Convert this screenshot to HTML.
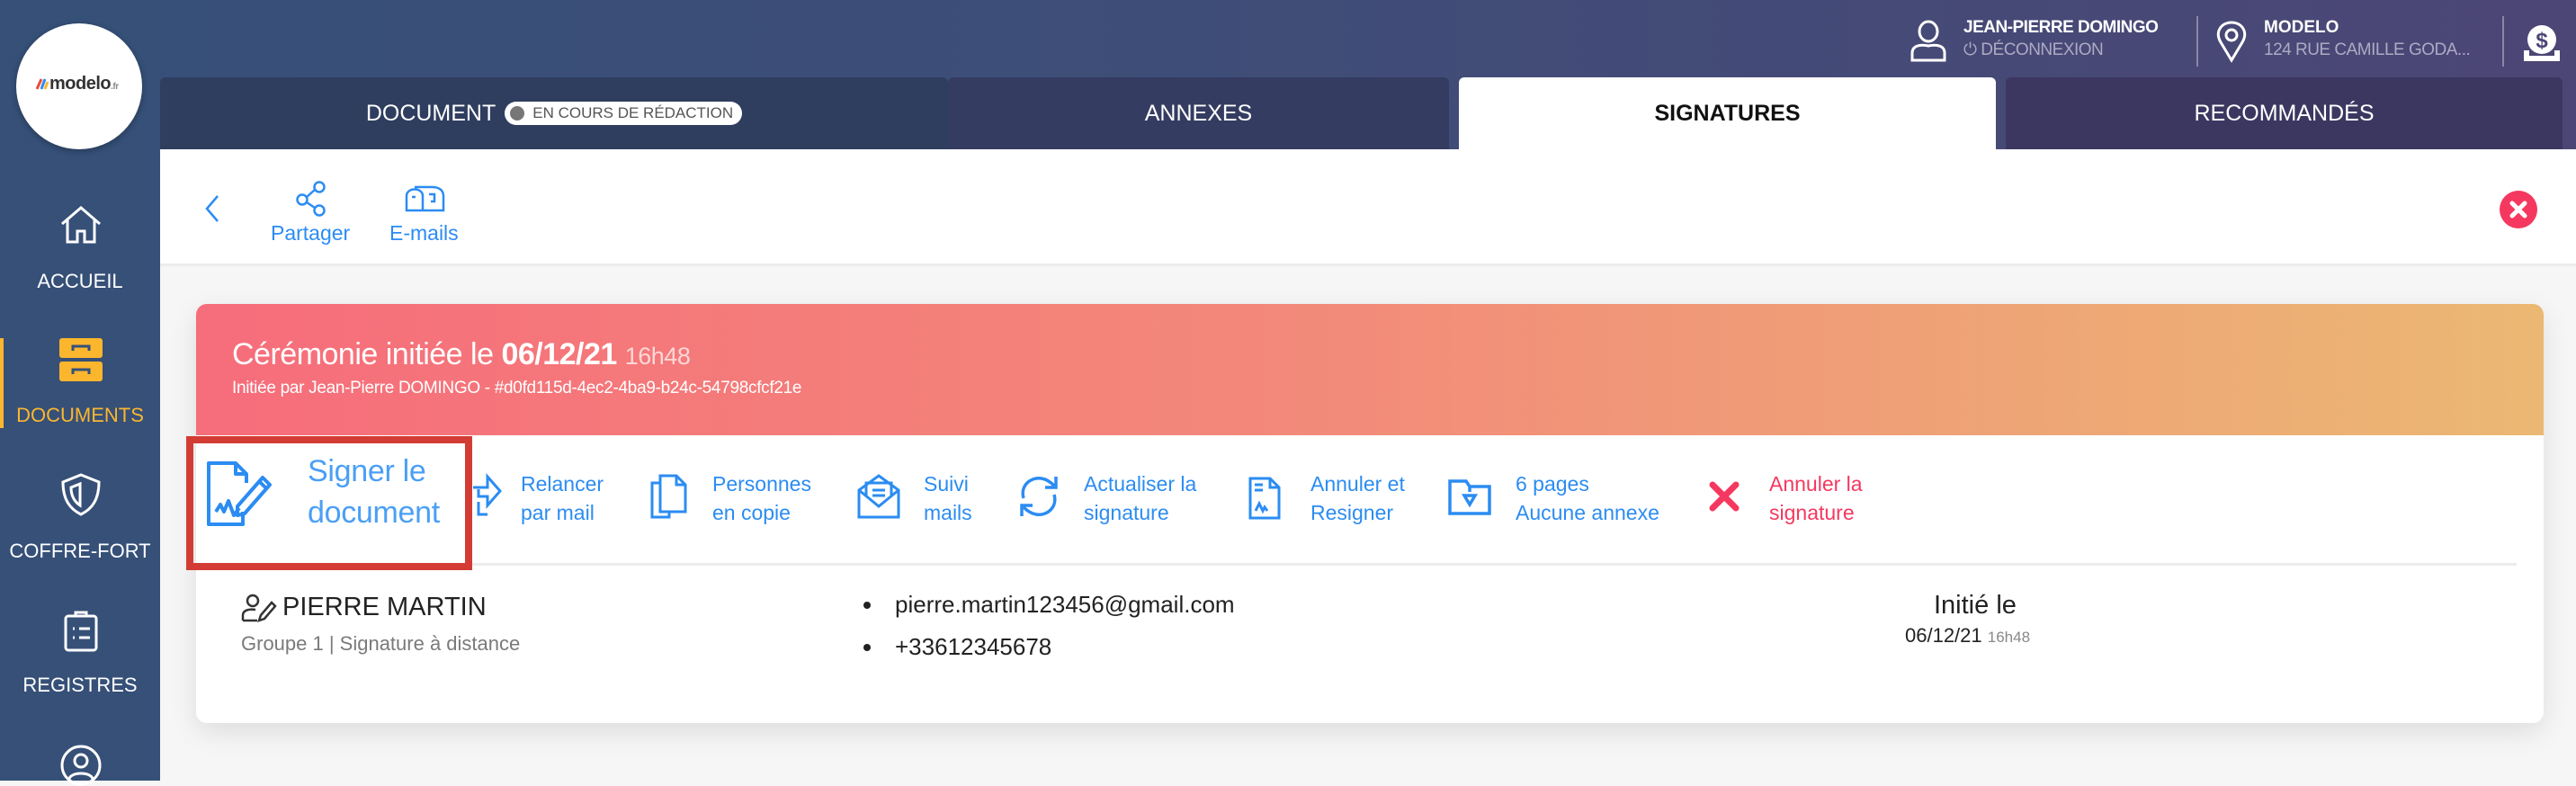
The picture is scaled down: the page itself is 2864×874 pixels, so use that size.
<!DOCTYPE html>
<html><head><meta charset="utf-8">
<style>
*{margin:0;padding:0;box-sizing:border-box}
body{width:2864px;height:868px;overflow:hidden;position:relative;font-family:"Liberation Sans",sans-serif;background:#f6f6f6}
.abs{position:absolute}
#top{left:0;top:0;width:2864px;height:166px;background:linear-gradient(90deg,#365079 0%,#3f4d77 50%,#4c4676 100%)}
#side{left:0;top:0;width:178px;height:868px;background:#365078}
.logo{left:18px;top:26px;width:140px;height:140px;border-radius:50%;background:#fff;box-shadow:0 2px 8px rgba(0,0,0,.3)}
.tab{top:86px;height:80px;color:#fff;font-size:25px;display:flex;align-items:center;justify-content:center;border-radius:6px 6px 0 0}
.slab{color:#fff;font-size:22px;width:178px;text-align:center;left:0}
.act{font-size:23px;line-height:32px;color:#2b8cf2}
svg{position:absolute;overflow:visible}
</style></head><body>
<div class="abs" id="top"></div>
<div class="abs" id="side"></div>
<div class="abs logo"></div>
<svg style="left:40px;top:86px" width="14" height="14" viewBox="0 0 14 14"><path d="M1 13 L6 2" stroke="#e94b3c" stroke-width="3"/><path d="M6 13 L10 2" stroke="#2b8cf2" stroke-width="3"/><path d="M10 13 L13 5" stroke="#fbb62e" stroke-width="3"/></svg>
<div class="abs" style="left:55px;top:82px;font-size:20px;font-weight:bold;color:#333;letter-spacing:-0.5px">modelo<span style="font-size:10px;color:#888">.fr</span></div>

<svg style="left:66px;top:229px" width="48" height="42" viewBox="0 0 48 42" fill="none" stroke="#fff" stroke-width="3"><path d="M3 20 L24 2 L45 20 M9 15 V40 H20 V28 H28 V40 H39 V15"/></svg>
<div class="abs slab" style="top:300px">ACCUEIL</div>
<div class="abs" style="left:0;top:376px;width:4px;height:100px;background:#fbb62e"></div>
<svg style="left:66px;top:376px" width="48" height="48" viewBox="0 0 48 48"><rect x="0" y="0" width="48" height="22" rx="3" fill="#fbb62e"/><rect x="0" y="26" width="48" height="22" rx="3" fill="#fbb62e"/><path d="M15 14 V9 H33 V14 M15 40 V35 H33 V40" stroke="#365078" stroke-width="3" fill="none"/></svg>
<div class="abs slab" style="top:449px;color:#fbb62e">DOCUMENTS</div>
<svg style="left:67px;top:526px" width="46" height="48" viewBox="0 0 46 48" fill="none" stroke="#fff" stroke-width="3"><path d="M23 2 L43 10 C43 30 35 40 23 46 C11 40 3 30 3 10 Z M22 12 L12 16 C12 26 16 32 22 36 Z"/></svg>
<div class="abs slab" style="top:600px">COFFRE-FORT</div>
<svg style="left:71px;top:677px" width="38" height="48" viewBox="0 0 38 48" fill="none" stroke="#fff" stroke-width="3"><rect x="2" y="8" width="34" height="38" rx="3"/><path d="M13 8 V4 H25 V8 M10 22 h2 M17 22 h12 M10 32 h2 M17 32 h12"/></svg>
<div class="abs slab" style="top:749px">REGISTRES</div>
<svg style="left:67px;top:828px" width="46" height="46" viewBox="0 0 46 46" fill="none" stroke="#fff" stroke-width="3"><circle cx="23" cy="23" r="21"/><circle cx="23" cy="18" r="7"/><path d="M10 38 C12 30 34 30 36 38"/></svg>

<div class="abs tab" style="left:178px;width:876px;background:#2f3e5f"><span>DOCUMENT</span><span style="margin-left:10px;background:#fff;border-radius:13px;height:26px;display:flex;align-items:center;padding:0 10px 0 6px;color:#555;font-size:17px"><span style="width:16px;height:16px;border-radius:50%;background:#777;margin-right:9px"></span>EN COURS DE RÉDACTION</span></div>
<div class="abs tab" style="left:1054px;width:557px;background:#353c61">ANNEXES</div>
<div class="abs tab" style="left:1622px;width:597px;background:#fff;color:#111;font-weight:bold">SIGNATURES</div>
<div class="abs tab" style="left:2230px;width:619px;background:#3c3761">RECOMMANDÉS</div>

<svg style="left:2124px;top:23px" width="40" height="46" viewBox="0 0 40 46" fill="none" stroke="#fff" stroke-width="3"><ellipse cx="20" cy="12" rx="10" ry="11"/><path d="M2 44 V36 C2 28 10 26 20 28 C30 26 38 28 38 36 V44 Z"/></svg>
<div class="abs" style="left:2183px;top:20px;color:#fff;font-size:19px;font-weight:bold;letter-spacing:-0.5px">JEAN-PIERRE DOMINGO</div>
<div class="abs" style="left:2183px;top:45px;color:#aeaac4;font-size:19px;letter-spacing:-0.5px">⏻ DÉCONNEXION</div>
<div class="abs" style="left:2442px;top:18px;width:2px;height:56px;background:#8a86a8"></div>
<svg style="left:2464px;top:23px" width="34" height="46" viewBox="0 0 34 46" fill="none" stroke="#fff" stroke-width="3"><path d="M17 44 L5 24 C-2 12 6 2 17 2 C28 2 36 12 29 24 Z"/><circle cx="17" cy="16" r="6"/></svg>
<div class="abs" style="left:2517px;top:20px;color:#fff;font-size:19px;font-weight:bold">MODELO</div>
<div class="abs" style="left:2517px;top:45px;color:#aeaac4;font-size:19px;letter-spacing:-0.5px">124 RUE CAMILLE GODA...</div>
<div class="abs" style="left:2782px;top:18px;width:2px;height:56px;background:#8a86a8"></div>
<svg style="left:2804px;top:26px" width="44" height="44" viewBox="0 0 44 44"><circle cx="22" cy="18" r="16" fill="#fff"/><text x="22" y="27" font-size="24" font-weight="bold" text-anchor="middle" fill="#4a4575" font-family="Liberation Sans">$</text><path d="M2 30 V42 H42 V30 H36 V36 H8 V30 Z" fill="#fff"/></svg>

<div class="abs" style="left:178px;top:166px;width:2686px;height:130px;background:#fff;border-bottom:3px solid #ececec"></div>
<svg style="left:226px;top:216px" width="20" height="32" viewBox="0 0 20 32" fill="none" stroke="#2b8cf2" stroke-width="2.5"><path d="M16 2 L4 16 L16 30"/></svg>
<svg style="left:328px;top:201px" width="36" height="40" viewBox="0 0 36 40" fill="none" stroke="#2b8cf2" stroke-width="2.5"><circle cx="27" cy="7" r="5.5"/><circle cx="8" cy="21" r="5.5"/><circle cx="27" cy="33" r="5.5"/><path d="M13 18 L22 10 M13 24 L22 30"/></svg>
<div class="abs act" style="left:301px;top:243px">Partager</div>
<svg style="left:450px;top:206px" width="45" height="30" viewBox="0 0 45 30" fill="none" stroke="#2b8cf2" stroke-width="2.5"><path d="M2 28 V12 C2 2 20 2 20 12 V28 Z M20 28 H43 V12 C43 4 36 2 30 2 H11 M8 13 h4 M27 10 H33 V18 H29"/></svg>
<div class="abs act" style="left:433px;top:243px">E-mails</div>
<svg style="left:2779px;top:212px" width="42" height="42" viewBox="0 0 42 42"><circle cx="21" cy="21" r="21" fill="#f5385f"/><path d="M14 14 L28 28 M28 14 L14 28" stroke="#fff" stroke-width="5" stroke-linecap="round"/></svg>

<div class="abs" style="left:218px;top:338px;width:2610px;height:466px;background:#fff;border-radius:12px;box-shadow:0 10px 30px rgba(0,0,0,.1);overflow:hidden">
 <div style="height:146px;background:linear-gradient(90deg,#f66d7b 0%,#f3887a 45%,#ebb873 100%)"></div>
 <div style="position:absolute;left:0;right:30px;top:288px;height:3px;background:#ececec"></div>
</div>
<div class="abs" style="left:258px;top:375px;color:#fff;font-size:34px;letter-spacing:-0.5px">Cérémonie initiée le <b>06/12/21</b> <span style="font-size:27px;color:rgba(255,255,255,.7)">16h48</span></div>
<div class="abs" style="left:258px;top:421px;color:#fff;font-size:19px;letter-spacing:-0.3px">Initiée par Jean-Pierre DOMINGO - #d0fd115d-4ec2-4ba9-b24c-54798cfcf21e</div>

<svg style="left:230px;top:513px" width="80" height="72" viewBox="0 0 80 72" fill="none" stroke="#2b8cf2" stroke-width="4" stroke-linejoin="round"><path d="M40 56 V70 H2 V2 H32 L44 14 V24 M32 2 V14 H44"/><path d="M10 56 L15 48 L19 56 L24 44 L30 60 L36 52"/><path d="M34 60 L34 50 L62 18 L70 26 L42 58 Z M58 22 L66 30"/></svg>
<div class="abs" style="left:342px;top:501px;font-size:34px;line-height:46px;color:#4a9ff5;letter-spacing:-0.3px">Signer le<br>document</div>
<svg style="left:522px;top:526px" width="36" height="48" viewBox="0 0 36 48" fill="none" stroke="#2b8cf2" stroke-width="3"><path d="M4 16 H20 V4 L34 20 L20 36 V26 H10 V18 M10 32 V46 H20"/></svg>
<div class="abs act" style="left:579px;top:522px">Relancer<br>par mail</div>
<svg style="left:722px;top:527px" width="42" height="50" viewBox="0 0 42 50" fill="none" stroke="#2b8cf2" stroke-width="3"><path d="M12 10 H3 V48 H22 V42 M12 2 H30 L40 12 V42 H12 Z M30 2 V12 H40"/></svg>
<div class="abs act" style="left:792px;top:522px">Personnes<br>en copie</div>
<svg style="left:953px;top:527px" width="48" height="50" viewBox="0 0 48 50" fill="none" stroke="#2b8cf2" stroke-width="3"><path d="M2 18 V48 H46 V18 L24 2 Z M2 18 L24 36 L46 18 M10 24 V10 H38 V24 M17 18 H31 M17 24 H31"/></svg>
<div class="abs act" style="left:1027px;top:522px">Suivi<br>mails</div>
<svg style="left:1132px;top:528px" width="46" height="48" viewBox="0 0 46 48" fill="none" stroke="#2b8cf2" stroke-width="3.5"><path d="M6 26 C2 12 14 2 26 4 C32 5 36 8 40 12 M42 2 V14 H30 M40 22 C44 36 32 46 20 44 C14 43 10 40 6 36 M4 46 V34 H16"/></svg>
<div class="abs act" style="left:1205px;top:522px">Actualiser la<br>signature</div>
<svg style="left:1388px;top:530px" width="36" height="48" viewBox="0 0 36 48" fill="none" stroke="#2b8cf2" stroke-width="3"><path d="M2 2 H24 L34 12 V46 H2 Z M24 2 V12 H34 M7 9 H16 M7 15 H16 M8 38 L12 30 L16 38 L18 34 L21 38"/></svg>
<div class="abs act" style="left:1457px;top:522px">Annuler et<br>Resigner</div>
<svg style="left:1610px;top:533px" width="48" height="40" viewBox="0 0 48 40" fill="none" stroke="#2b8cf2" stroke-width="3.5"><path d="M2 2 H20 L24 8 H46 V38 H2 Z M24 8 V14 M18 18 L24 28 L30 18 Z"/></svg>
<div class="abs act" style="left:1685px;top:522px">6 pages<br>Aucune annexe</div>
<svg style="left:1900px;top:535px" width="34" height="34" viewBox="0 0 34 34"><path d="M4 4 L30 30 M30 4 L4 30" stroke="#f5385f" stroke-width="7" stroke-linecap="round"/></svg>
<div class="abs act" style="left:1967px;top:522px;color:#f5385f">Annuler la<br>signature</div>

<div class="abs" style="left:207px;top:485px;width:318px;height:149px;border:8px solid #d33c34"></div>

<svg style="left:268px;top:660px" width="40" height="32" viewBox="0 0 40 32" fill="none" stroke="#333" stroke-width="2.5"><circle cx="13" cy="8" r="6"/><path d="M2 30 V24 C2 18 10 17 16 18 M2 30 H18 M20 30 L22 24 L34 10 L38 14 L26 28 Z"/></svg>
<div class="abs" style="left:314px;top:659px;font-size:29px;color:#222">PIERRE MARTIN</div>
<div class="abs" style="left:268px;top:703px;font-size:22px;color:#7a7a7a">Groupe 1 | Signature à distance</div>
<div class="abs" style="left:960px;top:669px;width:8px;height:8px;border-radius:50%;background:#222"></div>
<div class="abs" style="left:995px;top:657px;font-size:26px;color:#222">pierre.martin123456@gmail.com</div>
<div class="abs" style="left:960px;top:716px;width:8px;height:8px;border-radius:50%;background:#222"></div>
<div class="abs" style="left:995px;top:704px;font-size:26px;color:#222">+33612345678</div>
<div class="abs" style="left:2150px;top:657px;font-size:29px;color:#222">Initié le</div>
<div class="abs" style="left:2118px;top:694px;font-size:22px;color:#222">06/12/21 <span style="font-size:17px;color:#888">16h48</span></div>
</body></html>
